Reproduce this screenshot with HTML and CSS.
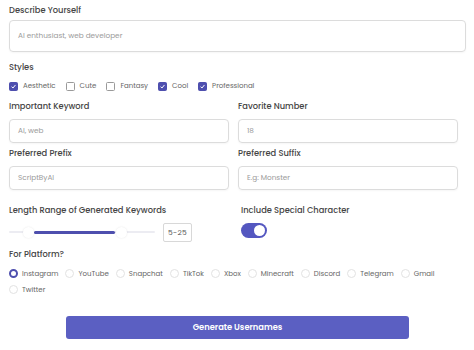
FILE: index.html
```html
<!DOCTYPE html>
<html>
<head>
<meta charset="utf-8">
<link rel="stylesheet" href="styles.css">
</head>
<body>
<div class="page">
  <div class="field full">
    <div class="label">Describe Yourself</div>
    <div class="input tall">AI enthusiast, web developer</div>
  </div>

  <div class="label styles-label">Styles</div>
  <div class="checks">
    <span class="check"><span class="box on"><svg viewBox="0 0 10 10"><path d="M2.3 5.2 L4.2 7.2 L7.8 2.8" /></svg></span>Aesthetic</span>
    <span class="check"><span class="box"></span>Cute</span>
    <span class="check"><span class="box"></span>Fantasy</span>
    <span class="check"><span class="box on"><svg viewBox="0 0 10 10"><path d="M2.3 5.2 L4.2 7.2 L7.8 2.8" /></svg></span>Cool</span>
    <span class="check"><span class="box on"><svg viewBox="0 0 10 10"><path d="M2.3 5.2 L4.2 7.2 L7.8 2.8" /></svg></span>Professional</span>
  </div>

  <div class="grid">
    <div class="field">
      <div class="label">Important Keyword</div>
      <div class="input">AI, web</div>
    </div>
    <div class="field">
      <div class="label">Favorite Number</div>
      <div class="input">18</div>
    </div>
    <div class="field">
      <div class="label">Preferred Prefix</div>
      <div class="input">ScriptByAI</div>
    </div>
    <div class="field">
      <div class="label">Preferred Suffix</div>
      <div class="input">E.g: Monster</div>
    </div>
  </div>

  <div class="grid range-row">
    <div class="field">
      <div class="label">Length Range of Generated Keywords</div>
      <div class="slider-row">
        <div class="slider">
          <div class="track"></div>
          <div class="fill"></div>
          <div class="thumb t1"></div>
          <div class="thumb t2"></div>
        </div>
        <div class="value">5-25</div>
      </div>
    </div>
    <div class="field special">
      <div class="label">Include Special Character</div>
      <div class="toggle"><span class="knob"></span></div>
    </div>
  </div>

  <div class="label platform-label">For Platform?</div>
  <div class="radios">
    <span class="radio"><span class="dot on"></span>Instagram</span>
    <span class="radio"><span class="dot"></span>YouTube</span>
    <span class="radio"><span class="dot"></span>Snapchat</span>
    <span class="radio"><span class="dot"></span>TikTok</span>
    <span class="radio"><span class="dot"></span>Xbox</span>
    <span class="radio"><span class="dot"></span>Minecraft</span>
    <span class="radio"><span class="dot"></span>Discord</span>
    <span class="radio"><span class="dot"></span>Telegram</span>
    <span class="radio"><span class="dot"></span>Gmail</span>
    <span class="radio"><span class="dot"></span>Twitter</span>
  </div>

  <div class="button-wrap">
    <div class="button">Generate Usernames</div>
  </div>
</div>
</body>
</html>
```

FILE: styles.css
```css
* { box-sizing: border-box; }
html, body { margin: 0; padding: 0; background: #ffffff; }
body {
  font-family: "Poppins", "Open Sans", "Noto Sans", sans-serif;
  color: #444444;
  width: 474px;
  height: 350px;
  overflow: hidden;
}
.page {
  padding: 3px 8px 0 9px;
}
.label {
  font-size: 8.3px;
  line-height: 14px;
  font-weight: 500;
  color: #444444;
  white-space: nowrap;
}
.input {
  border: 1px solid #dcdcdc;
  border-radius: 4px;
  height: 24px;
  margin-top: 6px;
  padding: 0 8px;
  font-size: 7.3px;
  line-height: 22px;
  color: #9a9a9a;
  box-shadow: 0 1px 2px rgba(0,0,0,0.04);
}
.input.tall {
  height: 32px;
  line-height: 30px;
  margin-top: 3px;
}
.styles-label { margin-top: 8px; }
.checks {
  display: flex;
  gap: 10px;
  margin-top: 5px;
  height: 14px;
  align-items: center;
}
.check {
  display: flex;
  align-items: center;
  gap: 5px;
  font-size: 7px;
  color: #666666;
}
.box {
  width: 9px;
  height: 9px;
  border: 1px solid #9a9a9a;
  border-radius: 1.5px;
  display: inline-flex;
}
.box.on {
  background: #4e4fae;
  border-color: #4e4fae;
}
.box svg { width: 100%; height: 100%; }
.box svg path { fill: none; stroke: #ffffff; stroke-width: 1.4; }
.grid {
  display: grid;
  grid-template-columns: 220px 220px;
  column-gap: 9px;
  row-gap: 3px;
  margin-top: 6px;
}
.range-row { margin-top: 13px; }
.slider-row {
  display: flex;
  align-items: center;
  gap: 8px;
  margin-top: 5px;
}
.slider {
  position: relative;
  width: 146px;
  height: 20px;
}
.track {
  position: absolute;
  left: 0; right: 0; top: 9px;
  height: 2px;
  background: #ececf2;
  border-radius: 1px;
}
.fill {
  position: absolute;
  left: 25px; width: 81px; top: 8.5px;
  height: 3px;
  background: #4e4fae;
  border-radius: 2px;
}
.thumb {
  position: absolute;
  top: 5px;
  width: 11px; height: 11px;
  border-radius: 50%;
  background: #ffffff;
  box-shadow: 0 0 2px rgba(0,0,0,0.1);
}
.t1 { left: 14px; }
.t2 { left: 107px; }
.value {
  border: 1px solid #d8d8d8;
  border-radius: 2px;
  font-size: 7.5px;
  color: #555;
  height: 19px;
  line-height: 17px;
  padding: 0 4px;
  letter-spacing: 0.3px;
}
.special { padding-left: 3px; }
.toggle {
  margin-top: 6px;
  width: 26px;
  height: 15px;
  border-radius: 8px;
  background: #5457c0;
  position: relative;
}
.knob {
  position: absolute;
  right: 2px; top: 2px;
  width: 11px; height: 11px;
  border-radius: 50%;
  background: #ffffff;
}
.platform-label { margin-top: 5px; }
.radios {
  display: flex;
  flex-wrap: wrap;
  column-gap: 7px;
  row-gap: 1px;
  margin-top: 5px;
  width: 440px;
}
.radio {
  display: flex;
  align-items: center;
  gap: 4px;
  font-size: 7px;
  color: #666666;
  height: 15px;
}
.dot {
  width: 9px; height: 9px;
  border-radius: 50%;
  border: 1px solid #e2e2e2;
}
.dot.on {
  border: 2.5px solid #4e4fae;
  background: #ffffff;
}
.button-wrap {
  padding-left: 57px;
  margin-top: 19px;
}
.button {
  width: 343px;
  height: 23px;
  border-radius: 3px;
  background: #5b5fc2;
  color: #ffffff;
  font-size: 8.3px;
  font-weight: 600;
  text-align: center;
  line-height: 23px;
}
```
